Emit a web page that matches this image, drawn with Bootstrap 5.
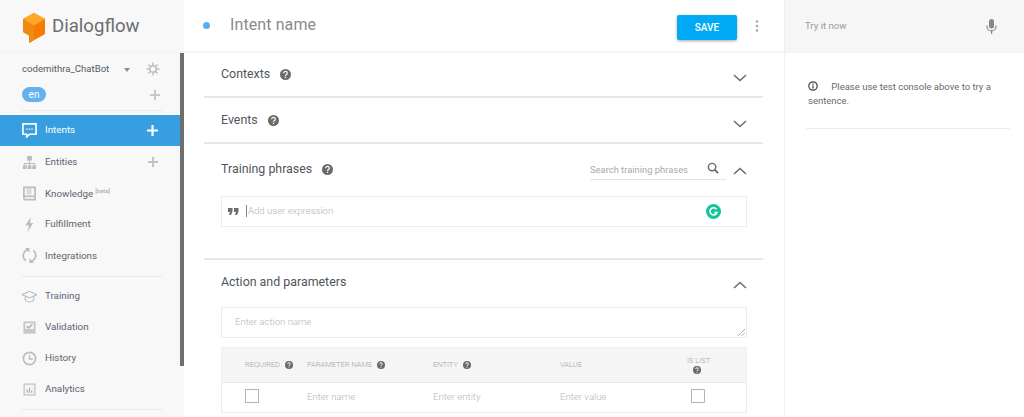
<!DOCTYPE html>
<html lang="en">
<head>
<meta charset="utf-8">
<title>Dialogflow</title>
<link rel="stylesheet" href="https://cdn.jsdelivr.net/npm/bootstrap@5.3.0/dist/css/bootstrap.min.css">
<style>
html,body{height:417px;overflow:hidden;background:#fff}
body{font-family:Roboto,"Liberation Sans",sans-serif;color:#5f6368;font-size:11px}
.shell{height:417px;width:1024px}
.side{width:184px;background:#f8f8f8;flex:none;position:relative}
.side-logo{height:53px;padding-left:22px;gap:6px;border-bottom:1px solid #f1f1f1;font-size:18.6px;color:#6b6e72}
.side-logo svg{flex:none;margin-top:3px}
.side-logo span{margin-top:2px}
.side-scroll{position:absolute;left:180px;top:53px;width:3.5px;height:313px;background:#6f6f6f}
.agent{height:57px;padding:0 24px 0 22px}
.agent-name{font-size:9.6px;color:#555b61;height:30px;padding-top:2px}
.caret{width:0;height:0;border:3.5px solid transparent;border-top:4px solid #8a8d90;margin:4px 0 0 0}
.lang{background:#64b1ee;color:#fff;border-radius:8px;width:24px;height:15px;font-size:10px;line-height:15px;text-align:center}
.rule{height:1px;background:#e9e9e9;margin:0 22px}
.rule-a{margin-bottom:4px}
.rule-b{margin-top:5px;margin-bottom:4px}
.rule-c{margin-top:5px}
.nav-line{height:31.2px;padding-left:22px;padding-right:22px;padding-top:1.5px;color:#5d6670;font-size:9.8px}
.nav-line.on{background:#379ee0;color:#fff;height:31px;padding-top:0}
.nav-short{height:30px}
.nav-line svg.ic{width:15px;height:15px;margin-right:8px;flex:none}
.beta{font-size:6px;color:#a0a3a6;vertical-align:4px;margin-left:2px}
.main-col{width:601px;flex:none;border-right:1px solid #efefef}
.top{height:53px;border-bottom:2px solid #f6f6f6;padding:0 25px 1px 19px}
.dot{width:7px;height:7px;border-radius:50%;background:#5aaeee;flex:none}
.title{font-size:16px;color:#8a8a8a;margin-left:20px;letter-spacing:.1px}
.savebtn{background:#00aaf5;color:#fff;border:0;border-radius:2px;width:60px;height:25px;font-size:10px;font-weight:500;padding:0;box-shadow:0 1px 3px rgba(0,0,0,.35);margin:4px 18px 0 0}
.kebab{margin-top:1px}
.sect{margin:0 21px 0 20px;border-bottom:2px solid #e8e8e8;padding:0 16px 0 17px}
.sect-h{font-size:12.4px;color:#50565c}
.q{margin-left:10px;flex:none}
.box{border:1px solid #ececec;height:31px;background:#fff}
.ph{color:#b5b5b5;font-size:9.6px;font-weight:300}
.search-u{width:136px;border-bottom:1px solid #e4e4e4;height:19px;font-size:9.4px;color:#a9a9a9;margin:2px 7px 0 0;padding-right:7px}
.search-u svg{margin-top:-4px}
.tbl-head{background:#f5f5f5;height:35px;font-size:7.5px;font-weight:300;color:#a4a4a4;text-transform:uppercase;border:1px solid #f0f0f0;border-bottom:0;margin-top:9px}
.tbl-row{height:31px;border:1px solid #ececec;border-top:1px solid #e8e8e8}
.cell-a{width:80px;flex:none;padding-left:23px}
.cell-b{width:131px;flex:none;padding-left:5px}
.cell-c{width:127px;flex:none}
.cell-d{width:127px;flex:none}
.cell-e{flex:1}
.chk{width:14px;height:14px;border:1px solid #b4b4b4;background:#fff;display:block;margin-top:-2px}
.chk-list{margin-left:4px}
.try-col{flex:1}
.try{height:53px;background:#f6f6f6;border-bottom:2px solid #f4f4f4;padding:1px 27px 0 20px;color:#9a9a9a;font-size:9.6px}
.msg{margin:27px 14px 0 21px;border-bottom:1px solid #ececec;height:49px;font-size:9.5px;line-height:14px;color:#666a6e;padding-left:2px}
.sect-one{height:44.5px}
.sect-two{height:46px}
.sect-two .sect-h,.sect-two .q{margin-top:2px}
.sect-three{height:116px}
.row-tp{height:52px}
.chev{margin-top:8px}
.chev-up{margin-top:2px}
.chev-act{margin-top:6px}
.quote{margin-left:2px}
.cursor-bar{width:1px;height:12px;background:#888;margin:0 1px 0 7px}
.grammarly{margin-right:25px}
.sect-four{margin:0 37px 0 20px;padding:0 0 0 17px}
.row-ap{height:47px;padding-bottom:2px}
.act{height:31px;padding-left:13px}
.grip{position:absolute;right:1px;bottom:1px}
.q2{margin-left:5px}
.q3{margin-left:6px;display:block}
.info{margin-right:11px;vertical-align:-1px}
</style>
</head>
<body>
<svg width="0" height="0" class="position-absolute">
  <defs>
    <g id="qm"><circle cx="6" cy="6" r="6" fill="#6a6a6a"/><path d="M4 4.600A2 2 0 0 1 8 4.600C8 6 6 6 6 7.500" fill="none" stroke="#fff" stroke-width="1.300"/><rect x="5.300" y="8.500" width="1.400" height="1.400" fill="#fff"/></g>
  </defs>
</svg>
<div class="shell d-flex">
  <aside class="side d-flex flex-column">
    <div class="side-logo d-flex align-items-center">
      <svg width="24" height="31" viewBox="0 0 24 31"><path d="M12 1 1 7v13l6 3.500V31l16-9V7z" fill="#f57c00"/><path d="M12 1 1 7l11 6.500L23 7z" fill="#ffa726"/><path d="M1 7v13l6 3.500V31l5-3V13.500z" fill="#ef8b12"/></svg>
      <span>Dialogflow</span>
    </div>
    <div class="side-scroll"></div>
    <div class="agent">
      <div class="agent-name d-flex align-items-center justify-content-between">
        <span>codemithra_ChatBot</span>
        <span class="d-flex align-items-center gap-3">
          <span class="caret"></span>
          <svg width="14" height="14" viewBox="0 0 24 24" fill="none" stroke="#bdbfc1" stroke-width="2.600"><circle cx="12" cy="12" r="5.500"/><path d="M12 1v5M12 18v5M1 12h5M18 12h5M4.200 4.200l3.500 3.500M16.300 16.300l3.500 3.500M4.200 19.800l3.500-3.500M16.300 7.700l3.500-3.500"/></svg>
        </span>
      </div>
      <div class="d-flex align-items-center justify-content-between mt-1">
        <span class="lang">en</span>
        <svg width="10" height="10" viewBox="0 0 10 10"><path d="M5 0v10M0 5h10" stroke="#c6c8ca" stroke-width="2"/></svg>
      </div>
    </div>
    <div class="rule rule-a"></div>
    <div class="nav-line on d-flex align-items-center">
      <svg class="ic" viewBox="0 0 16 16"><path d="M1 1h14v11H8l-3 3v-3H1z" fill="none" stroke="#fff" stroke-width="1.800"/><path d="M4.500 6.500h1.500M7.300 6.500h1.500M10 6.500h1.500" stroke="#fff" stroke-width="1.500"/></svg>
      <span>Intents</span>
      <svg class="ms-auto me-1" width="11" height="11" viewBox="0 0 11 11"><path d="M5.500 0v11M0 5.500h11" stroke="#fff" stroke-width="2.200"/></svg>
    </div>
    <div class="nav-line d-flex align-items-center">
      <svg class="ic" viewBox="0 0 16 16" fill="#b9bcc0"><rect x="5.500" y="1" width="5" height="5"/><rect x="1" y="11" width="4" height="4"/><rect x="6" y="11" width="4" height="4"/><rect x="11" y="11" width="4" height="4"/><path d="M7.500 6h1v2.500H14V11h-1V9.500H8.500V11h-1V9.500H3V11H2V8.500h5.500z"/></svg>
      <span>Entities</span>
      <svg class="ms-auto me-1" width="10" height="10" viewBox="0 0 10 10"><path d="M5 0v10M0 5h10" stroke="#c0c2c4" stroke-width="2"/></svg>
    </div>
    <div class="nav-line d-flex align-items-center">
      <svg class="ic" viewBox="0 0 16 16" fill="none" stroke="#b9bcc0" stroke-width="1.800"><path d="M2 1.500h12v13H3.500A1.500 1.500 0 0 1 2 13z"/><path d="M2 11h12"/><path d="M5 2h5v7H5z" fill="#d8dadc" stroke="none"/></svg>
      <span>Knowledge<span class="beta">[beta]</span></span>
    </div>
    <div class="nav-line d-flex align-items-center">
      <svg class="ic" viewBox="0 0 16 16"><path d="M9.500 0 3.500 9H7.500L6 16l6-9.500H8.500z" fill="#b9bcc0"/></svg>
      <span>Fulfillment</span>
    </div>
    <div class="nav-line d-flex align-items-center">
      <svg class="ic" viewBox="0 0 16 16" fill="none" stroke="#b9bcc0" stroke-width="1.800"><path d="M4 13.500A6.500 6.500 0 0 1 7 1.800"/><path d="M12 2.500A6.500 6.500 0 0 1 9 14.200"/><path d="M3 0h5v5z" fill="#b9bcc0" stroke="none"/><path d="M13 16H8v-5z" fill="#b9bcc0" stroke="none"/></svg>
      <span>Integrations</span>
    </div>
    <div class="rule rule-b"></div>
    <div class="nav-line nav-short d-flex align-items-center">
      <svg class="ic" viewBox="0 0 16 16" fill="none" stroke="#b9bcc0" stroke-width="1.200"><path d="M0 6l8-3.500L16 6l-8 3.500z"/><path d="M3.500 8v4c2 2.500 7 2.500 9 0V8"/></svg>
      <span>Training</span>
    </div>
    <div class="nav-line d-flex align-items-center">
      <svg class="ic" viewBox="0 0 16 16"><path d="M1.500 1.500h13v13h-13z" fill="#c5c8cb"/><path d="M3.500 3.500h9v6h-9z" fill="#f8f8f8"/><path d="M5 6.500l2 2 4-4" fill="none" stroke="#a8abaf" stroke-width="1.500"/></svg>
      <span>Validation</span>
    </div>
    <div class="nav-line d-flex align-items-center">
      <svg class="ic" viewBox="0 0 16 16" fill="none" stroke="#b9bcc0" stroke-width="1.800"><circle cx="8" cy="8" r="6.500"/><path d="M8 4.500V8.500h3.500" stroke-width="1.500"/></svg>
      <span>History</span>
    </div>
    <div class="nav-line d-flex align-items-center">
      <svg class="ic" viewBox="0 0 16 16"><path d="M1.500 1.500h13v13h-13z" fill="#c5c8cb"/><path d="M3 3h10v10H3z" fill="#f4f4f4"/><path d="M5 8h1.200v3.500H5zM7.400 6h1.200v5.500H7.400zM9.800 9h1.200v2.500H9.800z" fill="#a8abaf"/></svg>
      <span>Analytics</span>
    </div>
    <div class="rule rule-c"></div>
  </aside>

  <main class="main-col d-flex flex-column">
    <div class="top d-flex align-items-center">
      <span class="dot"></span>
      <span class="title">Intent name</span>
      <button class="savebtn ms-auto" type="button">SAVE</button>
      <svg class="kebab" width="4" height="12" viewBox="0 0 4 12" fill="#a5a7a9"><circle cx="2" cy="1.500" r="1.300"/><circle cx="2" cy="6" r="1.300"/><circle cx="2" cy="10.500" r="1.300"/></svg>
    </div>

    <section class="sect d-flex align-items-center sect-one">
      <span class="sect-h">Contexts</span>
      <svg class="q" width="11" height="11" viewBox="0 0 12 12"><use href="#qm"/></svg>
      <svg class="ms-auto chev" width="14" height="8" viewBox="0 0 14 8"><path d="M1 1l6 5.500L13 1" fill="none" stroke="#6d6d6d" stroke-width="1.600"/></svg>
    </section>
    <section class="sect d-flex align-items-center sect-two">
      <span class="sect-h">Events</span>
      <svg class="q" width="11" height="11" viewBox="0 0 12 12"><use href="#qm"/></svg>
      <svg class="ms-auto chev" width="14" height="8" viewBox="0 0 14 8"><path d="M1 1l6 5.500L13 1" fill="none" stroke="#6d6d6d" stroke-width="1.600"/></svg>
    </section>

    <section class="sect sect-three">
      <div class="d-flex align-items-center row-tp">
        <span class="sect-h">Training phrases</span>
        <svg class="q" width="11" height="11" viewBox="0 0 12 12"><use href="#qm"/></svg>
        <div class="search-u ms-auto d-flex align-items-center justify-content-between">
          <span>Search training phrases</span>
          <svg width="12" height="12" viewBox="0 0 13 13" fill="none" stroke="#66696c" stroke-width="1.600"><circle cx="5.500" cy="5.500" r="4"/><path d="M8.500 8.500 12 12" stroke-width="2"/></svg>
        </div>
        <svg class="chev-up" width="14" height="8" viewBox="0 0 14 8"><path d="M1 7l6-5.500L13 7" fill="none" stroke="#6d6d6d" stroke-width="1.600"/></svg>
      </div>
      <div class="box d-flex align-items-center ps-1">
        <svg class="quote" width="11" height="7" viewBox="0 0 11 7" fill="#6e6e6e"><path d="M0 0h4.500v3.500L3 7H1l1-3H0zM6 0h4.500v3.500L9 7H7l1-3H6z"/></svg>
        <span class="cursor-bar"></span>
        <span class="ph">Add user expression</span>
        <svg class="ms-auto grammarly" width="15" height="15" viewBox="0 0 15 15"><circle cx="7.500" cy="7.500" r="7.500" fill="#15c39a"/><path d="M10.500 5.200A3.600 3.600 0 1 0 11 8.500H8.200" fill="none" stroke="#fff" stroke-width="1.600"/></svg>
      </div>
    </section>

    <section class="sect-four">
      <div class="d-flex align-items-center row-ap">
        <span class="sect-h">Action and parameters</span>
        <svg class="ms-auto chev-act" width="14" height="8" viewBox="0 0 14 8"><path d="M1 7l6-5.500L13 7" fill="none" stroke="#6d6d6d" stroke-width="1.600"/></svg>
      </div>
      <div class="box act d-flex align-items-center position-relative">
        <span class="ph">Enter action name</span>
        <svg class="grip" width="7" height="7" viewBox="0 0 7 7"><path d="M0 7l7-7M3.500 7 7 3.500" stroke="#9a9a9a" stroke-width=".8"/></svg>
      </div>
      <div class="tbl-head d-flex align-items-center">
        <div class="cell-a d-flex align-items-center"><span>Required</span><svg class="q2" width="8" height="8" viewBox="0 0 12 12"><use href="#qm"/></svg></div>
        <div class="cell-b d-flex align-items-center"><span>Parameter name</span><svg class="q2" width="8" height="8" viewBox="0 0 12 12"><use href="#qm"/></svg></div>
        <div class="cell-c d-flex align-items-center"><span>Entity</span><svg class="q2" width="8" height="8" viewBox="0 0 12 12"><use href="#qm"/></svg></div>
        <div class="cell-d"><span>Value</span></div>
        <div class="cell-e"><span class="d-block">Is list</span><svg class="q3" width="8" height="8" viewBox="0 0 12 12"><use href="#qm"/></svg></div>
      </div>
      <div class="tbl-row d-flex align-items-center">
        <div class="cell-a"><span class="chk"></span></div>
        <div class="cell-b ph">Enter name</div>
        <div class="cell-c ph">Enter entity</div>
        <div class="cell-d ph">Enter value</div>
        <div class="cell-e"><span class="chk chk-list"></span></div>
      </div>
    </section>
  </main>

  <aside class="try-col d-flex flex-column">
    <div class="try d-flex align-items-center justify-content-between">
      <span>Try it now</span>
      <svg width="11" height="15" viewBox="0 0 11 15" fill="#85888b"><rect x="3" y="0" width="5" height="9.500" rx="2.500"/><path d="M1 6.500v1a4.500 4.500 0 0 0 9 0v-1" fill="none" stroke="#85888b" stroke-width="1.200"/><rect x="5" y="11" width="1.200" height="4"/></svg>
    </div>
    <div class="msg">
      <svg class="info" width="10" height="10" viewBox="0 0 12 12" fill="none" stroke="#444" stroke-width="1.500"><circle cx="6" cy="6" r="5"/><path d="M6 5.500V9M6 3v1.500"/></svg>
      Please use test console above to try a sentence.
    </div>
  </aside>
</div>
</body>
</html>
